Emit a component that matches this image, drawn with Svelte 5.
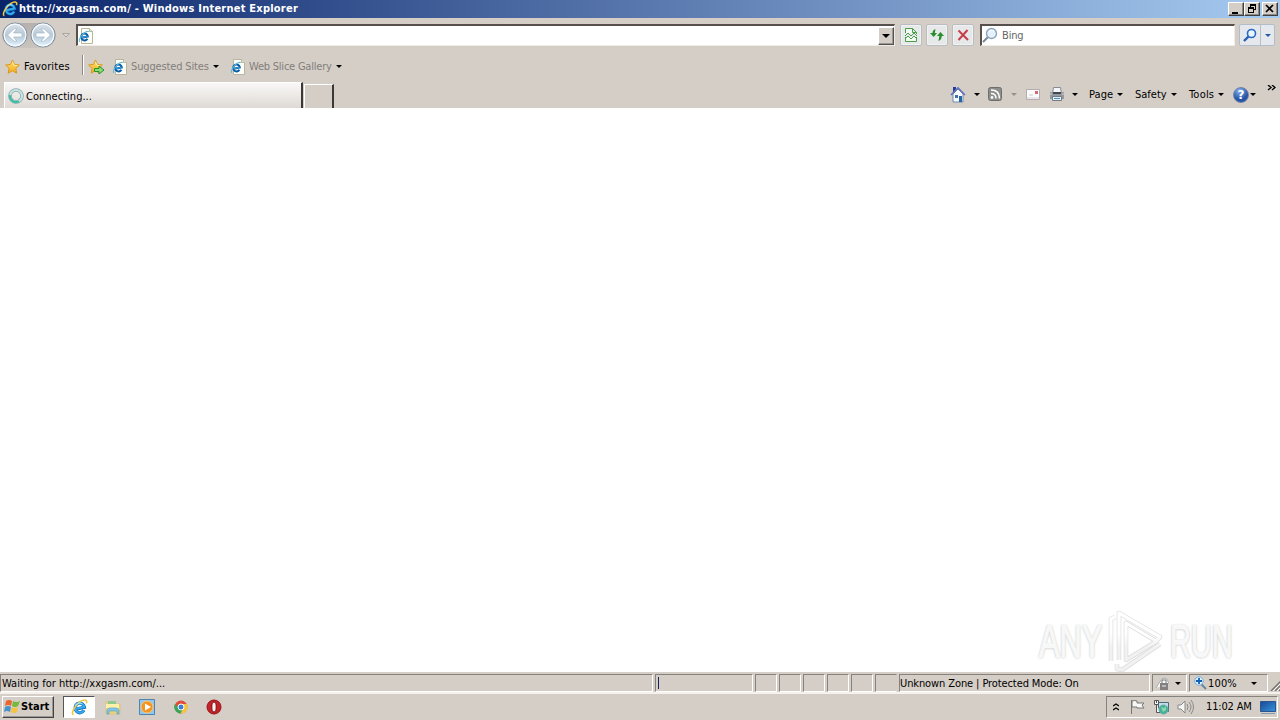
<script>
  const emptyPanes = [1, 2, 3, 4, 5];
</script>

{#snippet caret(muted = false)}
  <svg class="caret" width="6" height="3" viewBox="0 0 6 3"><path d="M0 0H6L3 3Z" fill={muted ? '#96918b' : '#000'} /></svg>
{/snippet}

{#snippet ie(size)}
  <svg width={size} height={size} viewBox="0 0 16 16">
    <path transform="rotate(-12 8 8)" d="M4.2 8.7H12.6A4.4 4.6 0 1 0 11.5 11.5" fill="none" stroke="#0b64b2" stroke-width="3" />
    <path transform="rotate(-12 8 8)" d="M4.2 8.5H12.5A4.4 4.6 0 1 0 11.5 11.3" fill="none" stroke="#36a9ee" stroke-width="2" />
    <path d="M2.3 14.7C-1.5 13 8-.2 13.8 1.1c1.3.4 1.1 1.9.6 3" fill="none" stroke="#efc63d" stroke-width="1.5" />
    <path d="M4.2 6C6 3.8 8.5 3.3 10.5 4.3" fill="none" stroke="#a9e9ff" />
  </svg>
{/snippet}

{#snippet iePage()}
  <svg width="16" height="16" viewBox="0 0 16 16">
    <path d="M3.5.5h8l3 3v12h-11Z" fill="#fffffa" stroke="#b8b59d" />
    <path d="M11.5.5v3h3" fill="#eee9c8" stroke="#b8b59d" />
    <g transform="translate(.2 2.6) scale(.76)">
      <path transform="rotate(-12 8 8)" d="M4.2 8.7H12.6A4.4 4.6 0 1 0 11.5 11.5" fill="none" stroke="#075ca8" stroke-width="2.6" />
      <path transform="rotate(-12 8 8)" d="M4.2 8.5H12.5" stroke="#2f9de2" stroke-width="1.4" />
      <path d="M2.3 14.7C-1.5 13 8-.2 14 1.1" fill="none" stroke="#62bcd5" stroke-width="1.4" />
    </g>
  </svg>
{/snippet}

{#snippet star()}
  <path d="M7.5 1 9.5 5.4l4.9.6-3.6 3.3.9 4.9-4.2-2.4-4.3 2.4.9-4.9L.6 6l4.9-.6Z" fill="url(#gold)" stroke="#d89a22" />
  <path d="M7.5 2.8 8.8 6.2l3.3.5" fill="none" stroke="#fff1a2" />
{/snippet}

{#snippet roundArrow(flip)}
  <svg width="26" height="26" viewBox="0 0 26 26">
    <circle cx="13" cy="13" r="12" fill="url(#orb)" stroke="#77899a" />
    <circle cx="13" cy="13" r="10.8" fill="none" stroke="#f5faff" stroke-width="1.2" />
    <path transform={flip ? 'translate(26 0) scale(-1 1)' : undefined} d="M5.5 13 12 6.8h3L11.5 11H20v4h-8.5l3.5 4.2h-3Z" fill="#fff" stroke="#a4b7c7" stroke-width=".7" />
  </svg>
{/snippet}

<svg class="defs" width="0" height="0" aria-hidden="true">
  <defs>
    <linearGradient id="gold" x2="0" y2="1"><stop stop-color="#ffe478" /><stop offset="1" stop-color="#f6a817" /></linearGradient>
    <linearGradient id="orb" x2="0" y2="1"><stop stop-color="#dfe5ea" /><stop offset=".5" stop-color="#b7c8d7" /><stop offset="1" stop-color="#e4f5ff" /></linearGradient>
    <linearGradient id="screen" x2="1" y2="1"><stop stop-color="#1a4996" /><stop offset="1" stop-color="#3693dc" /></linearGradient>
  </defs>
</svg>

<div class="desktop">
  <header class="title">
    <span class="logo">{@render ie(16)}</span>
    <strong>http://xxgasm.com/ - Windows Internet Explorer</strong>
    <div class="window-buttons">
      <span><svg width="14" height="12"><path d="M3 9h6v2H3Z" /></svg></span>
      <span><svg width="14" height="12"><path d="M5 1h6v6H9V6h1V3H6v1H5ZM3 4h6v6H3Zm1 2v3h4V6Z" fill-rule="evenodd" /></svg></span>
      <span class="close"><svg width="14" height="12"><path d="m3 2 7 7m0-7-7 7" stroke="#000" stroke-width="1.7" /></svg></span>
    </div>
  </header>

  <nav class="navigation">
    <div class="travel">{@render roundArrow(false)}{@render roundArrow(true)}</div>
    <svg class="history" width="8" height="5"><path d="M.5.5h7L4 4Z" fill="#ded9d3" stroke="#aaa5a0" /></svg>
    <div class="field address">
      {@render iePage()}
      <span class="dropdown"><svg width="8" height="4"><path d="M0 0h8L4 4Z" /></svg></span>
    </div>
    <span class="nav-button">
      <svg width="16" height="16" fill="none" stroke="#4b9c4b"><path d="M2.5 6V1.5h7l4 4V7M9.5 1.5v4h4M2.5 10v4.5h11V10" fill="#f3fcf0" /><path d="m2 9 3-3 3 3 3-3 3 3M2 12l3-3 3 3 3-3 3 3" /></svg>
    </span>
    <span class="nav-button">
      <svg width="16" height="16" fill="#278f2b"><path d="M3.5 6Q3.5 3 6.5 2L5.8 6H8L4.7 10 1 6ZM8 9l3.5-4L15 9h-2.3q0 4-3.2 5l.8-5Z" /></svg>
    </span>
    <span class="nav-button">
      <svg width="16" height="16"><path d="M3.5 3.5 13 13M12.5 3 3.5 13" stroke="#c64049" stroke-width="2" /></svg>
    </span>
    <div class="field search">
      <svg width="17" height="17"><path d="m6 10-5 5" stroke="#798996" stroke-width="2" /><circle cx="9.5" cy="6.5" r="5" fill="#e3f2fd" stroke="#8da5bb" stroke-width="1.4" /><path d="M7 5c1-2 3-2 5-1" stroke="#fff" fill="none" /></svg>
      <span>Bing</span>
    </div>
    <div class="search-go">
      <span><svg width="14" height="14"><path d="m6 8-5 5" stroke="#2460b0" stroke-width="2.4" /><circle cx="8.5" cy="5.5" r="4" fill="#e9f5ff" stroke="#2869c5" stroke-width="1.6" /></svg></span>
      <span><svg width="6" height="3"><path d="M0 0h6L3 3Z" fill="#245aa0" /></svg></span>
    </div>
  </nav>

  <div class="favorites">
    <svg width="15" height="16" viewBox="0 0 15 16">{@render star()}</svg>
    <span class="label fav">Favorites</span>
    <i class="divider"></i>
    <svg width="17" height="16" viewBox="0 0 17 16">{@render star()}<path d="M6.5 9.5H11V7l5 4-5 4v-2.5H6.5Z" fill="#8cdb76" stroke="#249328" /></svg>
    {@render iePage()}
    <span class="label muted suggested">Suggested Sites</span>
    {@render caret()}
    {@render iePage()}
    <span class="label muted gallery">Web Slice Gallery</span>
    {@render caret()}
  </div>

  <div class="tabs">
    <div class="tab">
      <svg width="16" height="16" fill="none"><circle cx="8" cy="8" r="6" stroke="#8ba7ab" stroke-width="3.6" /><circle cx="8" cy="8" r="6" stroke="#c6e4e2" stroke-width="2.2" /><path d="M2 7a6 6 0 0 0 9 6.2" stroke="#43bda6" stroke-width="2.2" /></svg>
      <span>Connecting...</span>
    </div>
    <div class="new-tab"></div>
    <div class="commands">
      <svg width="17" height="18" viewBox="0 0 17 18"><path d="M3 1h3v5H3Z" fill="#293b9a" /><path d="m3 8 5-5 5 5v8H3Z" fill="#f8fafc" stroke="#7089b2" /><path d="m1 9 7-7 7 7" fill="none" stroke="#6474b8" stroke-width="1.7" /><path d="M5 9h3v3H5Z" fill="#416fa8" /><path d="M9 10h3v6H9Z" fill="#2466a1" /></svg>
      {@render caret()}
      <svg width="15" height="15"><rect x=".5" y=".5" width="13" height="13" rx="2" fill="#8e8e8c" stroke="#6e6e6c" /><circle cx="4" cy="10.5" r="1.4" fill="#fff" /><path d="M3 6.5q5 0 5 5M3 3q8.5 0 8.5 8.5" fill="none" stroke="#fff" stroke-width="1.5" /></svg>
      {@render caret(true)}
      <svg width="14" height="11"><path d="M.5.5h13v10H.5Z" fill="#fcfbfc" stroke="#b4acb1" /><path d="M1 9h12" stroke="#d5d1db" /><path d="M9 2h3v3H9Z" fill="#da6675" /><path d="M3 6h4" stroke="#c8c6cd" /></svg>
      <svg width="17" height="17"><path d="M4.5 1.5h7l1 6h-9Z" fill="#f4f7fa" stroke="#858b91" /><path d="M1 6h14v7H1Z" fill="#92989d" /><path d="M4 6h8v2H4Z" fill="#41474d" /><path d="M3.5 10.5h9v4h-9Z" fill="#e5f0f6" stroke="#737b84" /><path d="M5 12.5h6" stroke="#4c91bd" /><path d="M1 8h2M13 8h2" stroke="#d4d8db" /></svg>
      {@render caret()}
      <span class="page">Page</span>{@render caret()}
      <span class="safety">Safety</span>{@render caret()}
      <span class="tools">Tools</span>{@render caret()}
      <span class="help">?</span>{@render caret()}
      <svg class="more" width="9" height="6"><path d="m1 0 3 2.5L1 5M5 0l3 2.5L5 5" stroke="#000" stroke-width="1.4" fill="none" /></svg>
    </div>
  </div>

  <main>
    <div class="watermark">
      <span class="any">ANY</span>
      <svg width="58" height="64" viewBox="0 0 58 64" fill="none" stroke-linejoin="round">
        <defs>
          <linearGradient id="mark" gradientUnits="userSpaceOnUse" x1="0" y1="0" x2="0" y2="64"><stop offset=".4" stop-color="#fff" /><stop offset=".6" stop-color="#f1f1f1" /></linearGradient>
        </defs>
        <g stroke="#dcdcdc" stroke-width="4.6"><path d="M4 52V10l4-2" /><path d="M12 51V4l41 24-4 4-30-18v37l31-19" /><path d="M10 55v5l5 1 38-26" /></g>
        <g stroke="url(#mark)" stroke-width="3.2"><path d="M4 52V10l4-2" /><path d="M12 51V4l41 24-4 4-30-18v37l31-19" /><path d="M10 55v5l5 1 38-26" /></g>
      </svg>
      <span class="run">RUN</span>
    </div>
  </main>

  <footer class="status">
    <span class="message">Waiting for http://xxgasm.com/...</span>
    <span class="progress"><i></i></span>
    {#each emptyPanes as pane (pane)}<span></span>{/each}
    <span class="last-pane"></span>
    <span class="zone">Unknown Zone | Protected Mode: On</span>
    <span class="privacy">
      <svg width="15" height="15"><path d="m1 12 3-5 4-5 4 1 2 5" fill="#fafafa" stroke="#aaa" /><path d="M5 7h8v7H5Z" fill="#858080" /><path d="M7 7V4h4v3" fill="none" stroke="#777" /><path d="M7 10h4" stroke="#eee" /></svg>{@render caret()}
    </span>
    <span class="scale">
      <svg width="13" height="14"><path d="m7 8 5 5" stroke="#67879a" stroke-width="2" /><circle cx="5" cy="5" r="4.2" fill="#e1f5ff" stroke="#72a9dc" /><path d="M2 5h6M5 2v6" stroke="#125eb2" stroke-width="1.8" /></svg><b>100%</b>{@render caret()}
    </span>
    <svg class="grip" width="13" height="15"><path d="M1 15 13 3M5 15l8-8M9 15l4-4" stroke="#77736f" stroke-width="1.5" /><path d="M2 16 14 4M6 16l8-8" stroke="#fff" /></svg>
  </footer>

  <footer class="taskbar">
    <div class="start">
      <svg width="18" height="16"><path d="M3 2q3-2 6 0L8 7Q5 5 2 7Z" fill="#e9642e" /><path d="M10 2q3 2 7 0l-2 5q-3 2-6 0Z" fill="#75b83e" /><path d="M2 8q3-2 6 0l-1 5Q4 11 1 13Z" fill="#4793cc" /><path d="M9 8q3 2 6 0l-1 5q-3 2-6 0Z" fill="#f5c33d" /></svg><strong>Start</strong>
    </div>
    <div class="active">{@render ie(17)}</div>
    <div class="shortcuts">
      <svg width="16" height="17"><path d="M1 3h5l1 2h8v10H1Z" fill="#eed37c" stroke="#d6be72" stroke-width=".6" /><path d="M3 2h8v3H3Z" fill="#8fca8c" /><path d="M1 5h13v4H1Z" fill="#fff0ac" /><path d="M2 15v-4l2-2h8l2 2v4h-2v-3H4v3Z" fill="#7fc8e7" stroke="#569bbf" stroke-width=".6" /></svg>
      <svg width="17" height="17"><path d="M.5.5h15v15H.5Z" fill="#90c9ed" stroke="#4c83b2" /><circle cx="8" cy="8" r="6" fill="#f49422" stroke="#ffc46f" /><path d="m6 4.5 6 3.5-6 3.5Z" fill="#fff" /></svg>
      <svg width="14" height="14" viewBox="0 0 14 14"><circle cx="7" cy="7" r="6.5" fill="#e04d3b" /><path d="M1 4a6.5 6.5 0 0 0 5.5 9.5L10 8H5Z" fill="#36a75b" /><path d="M7 4h6a6.5 6.5 0 0 1-6.5 9.5L10 7Z" fill="#f4c63e" /><circle cx="7" cy="7" r="3" fill="#387fd5" stroke="#fff" /></svg>
      <svg width="16" height="16"><circle cx="8" cy="8" r="7" fill="#c4232a" stroke="#981117" /><ellipse cx="8" cy="8" rx="2.2" ry="5" fill="#fff3f0" stroke="#790b12" /></svg>
    </div>
    <div class="tray">
      <svg width="6" height="8" fill="none" stroke="#000" stroke-width="1.3"><path d="m0 3 3-2 3 2M0 7l3-2 3 2" /></svg>
      <svg width="17" height="16"><path d="M2.5 1v14" stroke="#777" /><path d="M3 2q3-1 5 0v2h7l-2 2 2 3H8V8H3Z" fill="#f8f8f6" stroke="#777" /></svg>
      <svg width="17" height="17"><path d="M5.5 3.5h10v9h-10Z" fill="#c1dee8" stroke="#4c6a78" /><path d="M1.5 1.5h4v4h-4ZM3.5 5.5v8h4" fill="#f5f5f5" stroke="#555" /><path d="M3.5 1v3" stroke="#555" /><circle cx="10.5" cy="10.5" r="4.5" fill="#45b197" stroke="#68a7ab" /><path d="m8 8 3 1 2-2v4l-3 2Z" fill="#89d8ae" /></svg>
      <svg width="17" height="16" fill="none" stroke="#888"><path d="M1 6h3l4-4v12l-4-4H1Z" fill="#f6f6f6" /><path d="M10 5q2 3 0 6M12 3q4 5 0 10M14 1q5 7 0 14" /></svg>
      <time>11:02 AM</time>
      <svg width="16" height="15"><path d="M.5 1.5h15v10H.5Z" fill="url(#screen)" stroke="#2c558f" /><path d="M1 13h14v1H1Z" fill="#849bb4" /></svg>
    </div>
  </footer>
</div>

<style>
  :global(body) { margin: 0; overflow: hidden; }
  .desktop { width: 1280px; height: 720px; display: flex; flex-direction: column; background: #d5cec7; color: #000; font: 11px/14px "DejaVu Sans Condensed", "DejaVu Sans", sans-serif; font-stretch: condensed; }
  .defs { position: absolute; }
  svg { display: block; flex: none; }
  span, strong, b, time { white-space: nowrap; }
  .title { height: 18px; box-sizing: border-box; padding: 0 2px; display: flex; align-items: center; background: linear-gradient(90deg, #0a246a, #a6caf0); color: #fff; }
  .logo { width: 17px; }
  .title strong { width: 282px; letter-spacing: .23px; }
  .window-buttons { margin-left: auto; display: flex; margin-top: -1px; }
  .window-buttons span { width: 16px; height: 14px; box-sizing: border-box; border: 1px solid; border-color: #fff #404040 #404040 #fff; background: #d5cec7; box-shadow: inset -1px -1px #888; }
  .window-buttons .close { margin-left: 2px; }
  .navigation { height: 34px; display: grid; grid-template-columns: 60px 14px 824px 26px 26px 28px 259px 36px; align-items: center; padding-left: 2px; }
  .travel { width: 54px; display: flex; gap: 2px; background: linear-gradient(#b6b0ac, #cac4be); border-radius: 14px; height: 25px; align-items: center; }
  .field { height: 22px; box-sizing: border-box; background: #fff; border: 2px solid; border-color: #56514d #efebe5 #efebe5 #56514d; border-right-width: 1px; border-bottom-width: 1px; display: flex; align-items: center; }
  .address { width: 819px; }
  .dropdown { margin-left: auto; width: 16px; height: 18px; box-sizing: border-box; display: grid; place-items: center; border: 1px solid; border-color: #fff #55504c #55504c #fff; box-shadow: inset -1px -1px #999; background: #d5cec7; }
  .nav-button { width: 22px; height: 22px; box-sizing: border-box; border: 1px solid #b8bdc1; border-radius: 2px; background: #e6e8e9; display: grid; place-items: center; box-shadow: inset 0 0 0 1px #f2f2f1; }
  .search { width: 255px; gap: 3px; color: #666; letter-spacing: -.15px; }
  .search span { margin-top: 1px; }
  .search-go { width: 36px; height: 22px; box-sizing: border-box; display: flex; border: 1px solid #b2bdca; border-radius: 2px; background: #e5e9ed; }
  .search-go span { display: grid; place-items: center; width: 20px; }
  .search-go span + span { width: 13px; border-left: 1px solid #b5bfc9; }
  .favorites { height: 30px; display: grid; grid-template-columns: 19px 58px 6px 24px 19px 82px 17px 19px 87px 6px; padding-left: 5px; align-items: center; }
  .favorites .caret { margin-top: -1px; }
  .fav { letter-spacing: .13px; }
  .divider { width: 1px; height: 20px; background: #8a8682; border-right: 1px solid #fff; margin-top: -4px; }
  .muted { color: #827e7a; }
  .suggested { letter-spacing: -.15px; }
  .gallery { letter-spacing: -.22px; }
  .tabs { height: 26px; display: flex; padding-left: 4px; }
  .tab { width: 299px; height: 26px; box-sizing: border-box; border: 1px solid #fff; border-right: 2px solid #3a3937; border-bottom: 0; background: linear-gradient(#f9f8f7, #ded9d4); display: flex; align-items: center; padding-left: 3px; gap: 2px; }
  .tab span { margin-top: 3px; letter-spacing: .02px; }
  .tab svg { margin-top: 1px; }
  .new-tab { width: 30px; height: 24px; margin: 2px 0 0 1px; box-sizing: border-box; border: 1px solid #fff; border-right: 2px solid #3a3937; border-bottom: 0; }
  .commands { width: 330px; margin-left: auto; height: 25px; display: grid; grid-template-columns: 24px 14px 23px 15px 23px 23px 17px 28px 18px 36px 18px 29px 15px 17px 17px 9px; align-items: center; }
  .page { letter-spacing: .05px; }
  .tools { letter-spacing: .2px; }
  .help { width: 14px; height: 14px; border: 1px solid #7082aa; border-radius: 8px; background: radial-gradient(circle at 40% 20%, #88b5ef, #2854a6 60%); color: #fff; font: bold 12px/14px "DejaVu Sans", sans-serif; text-align: center; }
  .more { align-self: start; margin-top: 3px; }
  main { height: 564px; background: #fff; display: flex; align-items: flex-end; justify-content: flex-end; overflow: hidden; }
  .watermark { display: grid; grid-template-columns: 68px 61px 63px; margin-right: 49px; width: 192px; height: 64px; align-items: center; color: #f8f8f8; text-shadow: 0 0 2px #aaa, 0 1px 3px #ccc; font: 46px/64px "Liberation Sans", sans-serif; }
  .any, .run { margin-top: 1px; transform: scaleX(.67); transform-origin: left; -webkit-text-stroke: 1.5px #f8f8f8; }
  .run { padding-left: 3px; transform: scaleX(.63); }
  .status { height: 22px; box-sizing: border-box; display: grid; grid-template-columns: 653px 98px repeat(6, 22px) 251px 35px 79px 13px; column-gap: 2px; padding: 2px 0 1px; border-bottom: 2px solid #f5f1ed; }
  .status > span { border: 1px solid; border-color: #85817d #fff #fff #85817d; height: 18px; box-sizing: border-box; line-height: 17px; }
  .status > .last-pane { border-right-color: transparent; }
  .message { padding-left: 1px; }
  .progress i { display: block; width: 1px; height: 12px; background: #17245b; margin: 2px 0 0 2px; }
  .zone { letter-spacing: -.1px; }
  .status .privacy { display: flex; align-items: center; gap: 5px; padding-left: 2px; }
  .status .scale { display: flex; align-items: center; padding-left: 4px; }
  .scale b { font-weight: normal; width: 43px; margin-left: 1px; letter-spacing: .15px; }
  .grip { margin-top: 2px; }
  .taskbar { height: 26px; display: flex; align-items: center; box-sizing: border-box; padding: 0 2px; }
  .start { width: 52px; height: 22px; box-sizing: border-box; display: flex; align-items: center; border: 1px solid; border-color: #fff #45423f #45423f #fff; box-shadow: inset -1px -1px #999; }
  .start strong { letter-spacing: .05px; }
  .active { width: 32px; height: 22px; box-sizing: border-box; margin: 0 10px 0 9px; border: 1px solid; border-color: #555 #fff #fff #555; background: #fff; display: grid; place-items: center; }
  .shortcuts { display: grid; grid-template-columns: 34px 35px 32px 16px; align-items: center; }
  .tray { margin-left: auto; width: 172px; height: 22px; box-sizing: border-box; display: grid; grid-template-columns: 16px 24px 24px 29px 54px 16px; padding-left: 6px; align-items: center; border: 1px solid; border-color: #86827d #fff #fff #86827d; }
  time { letter-spacing: -.15px; }
</style>
